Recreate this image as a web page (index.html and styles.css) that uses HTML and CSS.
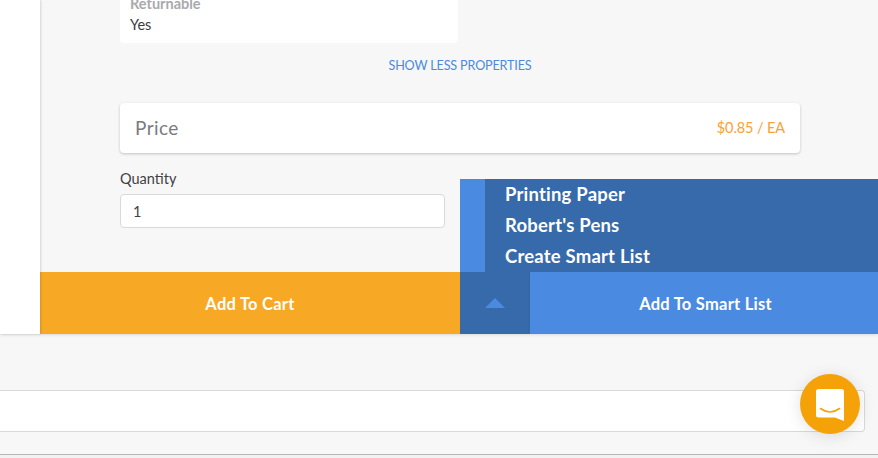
FILE: index.html
```html
<!DOCTYPE html>
<html lang="en">
<head>
<meta charset="utf-8">
<title>Product</title>
<link rel="stylesheet" href="styles.css">
</head>
<body>
<div class="top">
  <aside class="rail"></aside>
  <main class="panel">
    <div class="scroll">
      <div class="props">
        <div class="prop-label">Returnable</div>
        <div class="prop-value">Yes</div>
      </div>
      <div class="toggle-row"><a class="toggle">SHOW LESS PROPERTIES</a></div>
      <div class="price-card">
        <span class="price-label">Price</span>
        <span class="price-value">$0.85 / EA</span>
      </div>
      <label class="qty-label">Quantity</label>
      <div class="qty-input">1</div>
    </div>
    <div class="actions">
      <button class="btn cart">Add To Cart</button>
      <div class="split">
        <div class="menu">
          <div class="menu-item">Printing Paper</div>
          <div class="menu-item">Robert's Pens</div>
          <div class="menu-item">Create Smart List</div>
        </div>
        <button class="caret"><svg class="caret-icon" viewBox="0 0 20 10" width="20" height="10"><path d="M0 10 10 0l10 10z"/></svg></button>
        <button class="btn smart">Add To Smart List</button>
      </div>
    </div>
  </main>
</div>
<div class="bottom">
  <div class="field"></div>
  <button class="chat" aria-label="Chat">
    <svg viewBox="0 0 28 32" width="28" height="32"><path d="M2.500 0h23A2.500 2.500 0 0 1 28 2.500V32l-9-3.600H2.500A2.500 2.500 0 0 1 0 25.900V2.500A2.500 2.500 0 0 1 2.500 0z" fill="#fff"/><path d="M4.500 19.500Q14 26.500 23.500 19.500" fill="none" stroke="#f5a209" stroke-width="1.600" stroke-linecap="round"/></svg>
  </button>
</div>
<div class="edge"></div>
</body>
</html>
```
FILE: styles.css
```css
* { box-sizing: border-box; }
html, body { margin: 0; height: 100%; }
body {
  width: 878px;
  height: 458px;
  overflow: hidden;
  background: #f2f2f2;
  font-family: "Lato", "Open Sans", sans-serif;
  color: #3f3f46;
  display: flex;
  flex-direction: column;
}
button { font-family: inherit; border: 0; padding: 0; margin: 0; }

.top { height: 334px; display: flex; background: #fff; flex: none; position: relative; z-index: 1; box-shadow: 0 1px 3px rgba(0,0,0,.12); }
.rail { width: 40px; flex: none; background: #fff; box-shadow: 1px 0 2px rgba(0,0,0,.14); position: relative; }
.panel { flex: 1; background: #f7f7f7; display: flex; flex-direction: column; justify-content: flex-end; overflow: hidden; }
.scroll { flex: none; padding: 0 78px 44px 80px; }

.props { width: 338px; background: #fff; border-radius: 0 0 4px 4px; padding: 0 10px 7px; }
.prop-label { font-size: 14.500px; font-weight: 700; line-height: 18px; color: #a9a9ae; }
.prop-value { font-size: 14.500px; line-height: 23px; color: #3a3a42; }

.toggle-row { display: flex; justify-content: center; margin-top: 14px; width: 680px; height: 18px; line-height: 18px; }
.toggle { font-size: 12.600px; letter-spacing: -.15px; color: #4a8ae0; }

.price-card { margin-top: 28px; height: 50px; width: 680px; background: #fff; border-radius: 4px; box-shadow: 0 1px 3px rgba(0,0,0,.22); display: flex; align-items: center; justify-content: space-between; padding: 0 15px 1px; }
.price-label { font-size: 19px; letter-spacing: .4px; color: #7b7b7f; }
.price-value { font-size: 14.500px; letter-spacing: -.1px; color: #f9a233; }

.qty-label { display: block; margin-top: 17px; font-size: 14.500px; line-height: 18px; color: #3f3f46; }
.qty-input { margin-top: 6px; width: 325px; height: 34px; background: #fff; border: 1px solid #d9d9d9; border-radius: 4px; padding: 0 12px; font-size: 14.500px; line-height: 34px; color: #3f3f46; }

.actions { flex: none; display: flex; height: 62px; }
.btn { color: #fff; font-size: 16.500px; font-weight: 700; letter-spacing: .25px; height: 62px; padding-top: 1px; }
.cart { width: 420px; background: #f7a825; }
.split { flex: 1; display: flex; position: relative; }
.caret { width: 70px; background: #376aaa; display: flex; align-items: center; justify-content: center; }
.caret-icon { fill: #4a8ae0; display: block; }
.smart { flex: 1; background: #4a8ae0; padding-left: 3px; box-shadow: 0 -1px 2px rgba(0,0,0,.1); }

.menu { position: absolute; left: 0; right: 0; bottom: 100%; height: 93px; background: #376aaa; border-left: 25px solid #4a8ae0; padding-left: 20px; }
.menu-item { height: 31px; line-height: 31px; color: #fff; font-size: 18.500px; font-weight: 700; letter-spacing: .2px; white-space: nowrap; }

.bottom { flex: none; height: 121px; background: #f7f7f7; position: relative; padding-top: 56px; border-bottom: 1px solid #b5b5b5; }
.field { height: 42px; width: 865px; background: #fff; border: 1px solid #d9d9d9; border-left: 0; border-radius: 0 4px 4px 0; }
.chat { position: absolute; left: 800px; top: 40px; width: 60px; height: 60px; border-radius: 50%; background: #f5a209; box-shadow: 0 2px 16px rgba(0,0,0,.12); display: flex; align-items: center; justify-content: center; padding-top: 1px; }
.chat svg { display: block; }
.edge { flex: 1; background: #f2f2f2; }
```
